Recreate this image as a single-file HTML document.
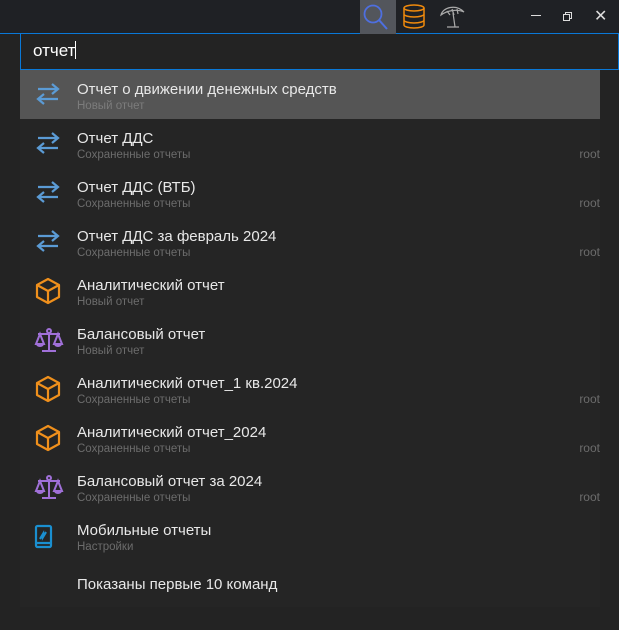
<!DOCTYPE html>
<html><head><meta charset="utf-8"><style>
*{margin:0;padding:0;box-sizing:border-box}
body{width:619px;height:630px;background:#232323;font-family:"Segoe UI","Liberation Sans","DejaVu Sans",sans-serif;overflow:hidden;position:relative}
.top{position:absolute;left:0;top:0;width:619px;height:34px;background:#1f2125;border-bottom:1px solid #0a78d7}
.panel{position:absolute;left:20px;top:69px;width:580px;height:538px;background:#252525}
.search{position:absolute;left:20px;top:34px;width:599px;height:36px;border:1px solid #0a78d7;border-top:none;background:#232323;color:#fff;font-size:17px;padding:7px 0 0 12px}
.row{position:absolute;left:20px;width:580px;height:49px}
.row.sel{background:#555555}
.t{position:absolute;left:57px;top:11px;color:#e8e8e8;font-size:15px;white-space:nowrap}
.s{position:absolute;left:57px;top:30px;color:#6c6c6c;font-size:11.5px;white-space:nowrap}
.sel .s{color:#7c7c7c}
.r{position:absolute;right:0;top:28px;color:#6c6c6c;font-size:12px}
.ic{position:absolute;left:14px;top:11px}
</style></head><body>
<div class="top">
 <div style="position:absolute;left:360px;top:0;width:36px;height:34px;background:#53565c"></div>
 <svg style="position:absolute;left:362px;top:3px" width="30" height="28" viewBox="0 0 30 28"><circle cx="11" cy="11" r="8.5" fill="none" stroke="#4e6fe0" stroke-width="1.8"/><path d="M17 17l8 9" stroke="#4e6fe0" stroke-width="2"/></svg>
 <svg style="position:absolute;left:402px;top:4px" width="24" height="26" viewBox="0 0 24 26"><g fill="none" stroke="#f08a0c" stroke-width="1.5"><ellipse cx="12" cy="4" rx="10" ry="3"/><path d="M2 4v17c0 1.7 4.5 3 10 3s10-1.3 10-3V4M2 10c0 1.7 4.5 3 10 3s10-1.3 10-3M2 16c0 1.7 4.5 3 10 3s10-1.3 10-3"/></g></svg>
 <svg style="position:absolute;left:440px;top:4px" width="26" height="26" viewBox="0 0 26 26"><g fill="none" stroke="#aaa" stroke-width="1.2"><path d="M1 11C3 3 16 0 24 8C17 5 8 6 1 11z"/><path d="M7 7l3 4M12 5l2 6M17 5l1 5"/><path d="M13 9l2 14M7 23h12"/></g></svg>
 <div style="position:absolute;left:531px;top:15px;width:10px;height:1px;background:#ddd"></div>
 <div style="position:absolute;left:565px;top:12px;width:7px;height:7px;border:1px solid #ddd"></div>
 <div style="position:absolute;left:563px;top:14px;width:7px;height:7px;border:1px solid #ddd;background:#1f2125"></div>
 <div style="position:absolute;left:594px;top:6px;color:#ddd;font-size:16px">✕</div>
</div>
<div class="panel"></div>
<div class="search">отчет<span style="display:inline-block;width:1px;height:18px;background:#fff;vertical-align:-3px"></span></div>

<div class="row sel" style="top:70px"><svg class="ic" width="28" height="26" viewBox="0 0 28 26"><g fill="none" stroke="#5b9bd5" stroke-width="2.2"><path d="M4 8h20M18 3l6 5-6 5M24 18H4M10 13l-6 5 6 5"/></g></svg><div class="t">Отчет о движении денежных средств</div><div class="s">Новый отчет</div></div>
<div class="row" style="top:119px"><svg class="ic" width="28" height="26" viewBox="0 0 28 26"><g fill="none" stroke="#5b9bd5" stroke-width="2.2"><path d="M4 8h20M18 3l6 5-6 5M24 18H4M10 13l-6 5 6 5"/></g></svg><div class="t">Отчет ДДС</div><div class="s">Сохраненные отчеты</div><div class="r">root</div></div>
<div class="row" style="top:168px"><svg class="ic" width="28" height="26" viewBox="0 0 28 26"><g fill="none" stroke="#5b9bd5" stroke-width="2.2"><path d="M4 8h20M18 3l6 5-6 5M24 18H4M10 13l-6 5 6 5"/></g></svg><div class="t">Отчет ДДС (ВТБ)</div><div class="s">Сохраненные отчеты</div><div class="r">root</div></div>
<div class="row" style="top:217px"><svg class="ic" width="28" height="26" viewBox="0 0 28 26"><g fill="none" stroke="#5b9bd5" stroke-width="2.2"><path d="M4 8h20M18 3l6 5-6 5M24 18H4M10 13l-6 5 6 5"/></g></svg><div class="t">Отчет ДДС за февраль 2024</div><div class="s">Сохраненные отчеты</div><div class="r">root</div></div>
<div class="row" style="top:266px"><svg class="ic" width="28" height="28" viewBox="0 0 28 28"><g fill="none" stroke="#f0901c" stroke-width="2.2" stroke-linejoin="round"><path d="M14 2L25 8v12L14 26 3 20V8z"/><path d="M3 8l11 6 11-6M14 14v12"/></g></svg><div class="t">Аналитический отчет</div><div class="s">Новый отчет</div></div>
<div class="row" style="top:315px"><svg class="ic" width="30" height="28" viewBox="0 0 30 28"><g fill="none" stroke="#a070d8" stroke-width="2"><circle cx="15" cy="5" r="2"/><path d="M15 7v17M8 25h14M4 8h22M6 8l-4 10h8zM24 8l-4 10h8z"/></g><path d="M2 18h8a4 3 0 0 1-8 0zM20 18h8a4 3 0 0 1-8 0z" fill="#a070d8"/></svg><div class="t">Балансовый отчет</div><div class="s">Новый отчет</div></div>
<div class="row" style="top:364px"><svg class="ic" width="28" height="28" viewBox="0 0 28 28"><g fill="none" stroke="#f0901c" stroke-width="2.2" stroke-linejoin="round"><path d="M14 2L25 8v12L14 26 3 20V8z"/><path d="M3 8l11 6 11-6M14 14v12"/></g></svg><div class="t">Аналитический отчет_1 кв.2024</div><div class="s">Сохраненные отчеты</div><div class="r">root</div></div>
<div class="row" style="top:413px"><svg class="ic" width="28" height="28" viewBox="0 0 28 28"><g fill="none" stroke="#f0901c" stroke-width="2.2" stroke-linejoin="round"><path d="M14 2L25 8v12L14 26 3 20V8z"/><path d="M3 8l11 6 11-6M14 14v12"/></g></svg><div class="t">Аналитический отчет_2024</div><div class="s">Сохраненные отчеты</div><div class="r">root</div></div>
<div class="row" style="top:462px"><svg class="ic" width="30" height="28" viewBox="0 0 30 28"><g fill="none" stroke="#a070d8" stroke-width="2"><circle cx="15" cy="5" r="2"/><path d="M15 7v17M8 25h14M4 8h22M6 8l-4 10h8zM24 8l-4 10h8z"/></g><path d="M2 18h8a4 3 0 0 1-8 0zM20 18h8a4 3 0 0 1-8 0z" fill="#a070d8"/></svg><div class="t">Балансовый отчет за 2024</div><div class="s">Сохраненные отчеты</div><div class="r">root</div></div>
<div class="row" style="top:511px"><svg class="ic" style="left:12px;top:12px" width="26" height="26" viewBox="0 0 26 26"><g fill="none" stroke="#1a8fd0" stroke-width="2.2"><rect x="4" y="3" width="15" height="21" rx="1.5"/><path d="M4 20h15M8 16l3-5v3l3-5"/></g></svg><div class="t">Мобильные отчеты</div><div class="s">Настройки</div></div>
<div style="position:absolute;left:77px;top:576px;color:#e8e8e8;font-size:15px">Показаны первые 10 команд</div>
</body></html>
